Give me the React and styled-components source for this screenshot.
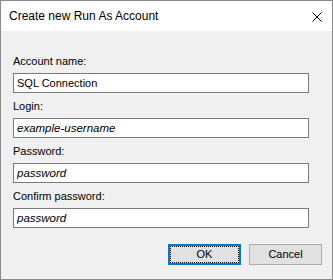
import React from "react";
import styled, { createGlobalStyle } from "styled-components";

const Global = createGlobalStyle`
  html, body { margin: 0; padding: 0; background: #f0f0f0; }
  * { box-sizing: border-box; }
`;

const Window = styled.div`
  width: 333px;
  height: 280px;
  border: 1px solid #8a8a8a;
  display: flex;
  flex-direction: column;
  font-family: "Liberation Sans", Arial, sans-serif;
  color: #000;
`;

const TitleBar = styled.div`
  height: 30px;
  flex: none;
  background: #fff;
  display: flex;
  align-items: center;
  justify-content: space-between;
  padding: 0 10px 0 8px;
  font-size: 12px;
`;

const Title = styled.span`
  line-height: 30px;
`;

const CloseIcon = () => (
  <svg width="10" height="10" viewBox="0 0 10 10" style={{ display: "block", marginTop: "1px" }}>
    <path d="M0.5 0.5 L9.5 9.5 M9.5 0.5 L0.5 9.5" stroke="#000" strokeWidth="1" fill="none" />
  </svg>
);

const Body = styled.div`
  flex: 1;
  background: #f0f0f0;
  padding: 24px 10px 14px 12px;
  display: flex;
  flex-direction: column;
`;

const Form = styled.div`
  display: flex;
  flex-direction: column;
  gap: 7px;
`;

const Field = styled.div`
  display: flex;
  flex-direction: column;
`;

const Label = styled.label`
  font-size: 11px;
  line-height: 13px;
  margin-bottom: 5px;
`;

const Input = styled.input`
  width: 296px;
  height: 20px;
  border: 1px solid #7a7a7a;
  background: #fff;
  padding: 0 3px;
  margin: 0;
  font-family: "Liberation Sans", Arial, sans-serif;
  font-size: ${(p) => (p.$italic ? "11.5px" : "11px")};
  font-style: ${(p) => (p.$italic ? "italic" : "normal")};
  color: #000;
  line-height: 18px;
  outline: none;
`;

const ButtonRow = styled.div`
  display: flex;
  justify-content: flex-end;
  gap: 8px;
  margin-top: 16px;
`;

const Button = styled.button`
  width: 73px;
  height: 21px;
  padding: 0;
  margin: 0;
  background: #e1e1e1;
  border: ${(p) => (p.$primary ? "2px solid #0078d7" : "1px solid #adadad")};
  outline: ${(p) => (p.$primary ? "1px dotted #000" : "none")};
  outline-offset: -3px;
  font-family: "Liberation Sans", Arial, sans-serif;
  font-size: 11px;
  color: #000;
  line-height: 1;
`;

const fields = [
  { label: "Account name:", value: "SQL Connection", italic: false },
  { label: "Login:", value: "example-username", italic: true },
  { label: "Password:", value: "password", italic: true },
  { label: "Confirm password:", value: "password", italic: true },
];

export default function App() {
  return (
    <>
      <Global />
      <Window>
        <TitleBar>
          <Title>Create new Run As Account</Title>
          <CloseIcon />
        </TitleBar>
        <Body>
          <Form>
            {fields.map((f) => (
              <Field key={f.label}>
                <Label>{f.label}</Label>
                <Input $italic={f.italic} defaultValue={f.value} readOnly />
              </Field>
            ))}
          </Form>
          <ButtonRow>
            <Button $primary>OK</Button>
            <Button>Cancel</Button>
          </ButtonRow>
        </Body>
      </Window>
    </>
  );
}
